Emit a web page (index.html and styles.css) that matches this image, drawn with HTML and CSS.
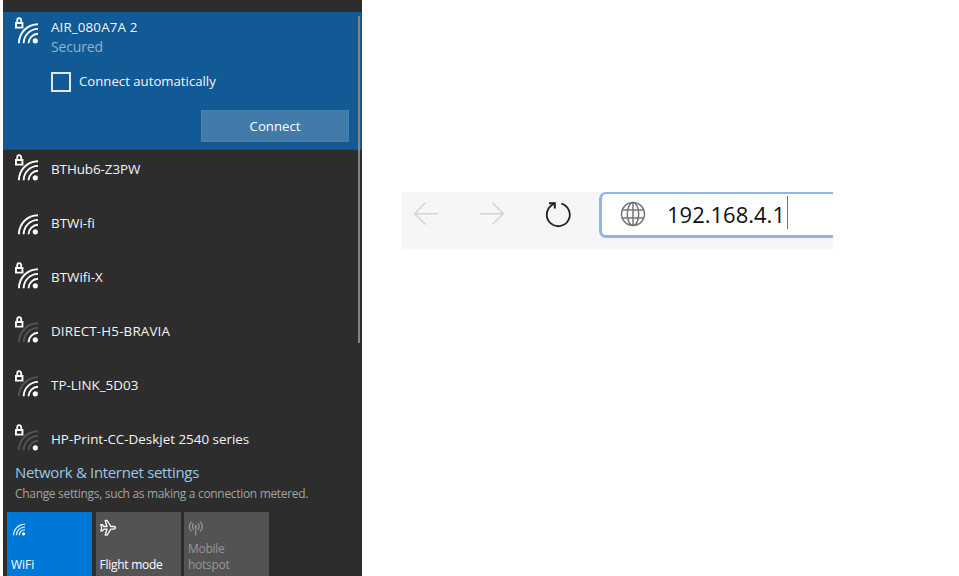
FILE: index.html
```
<!DOCTYPE html>
<html lang="en">
<head>
<meta charset="utf-8">
<title>Network setup</title>
<link rel="stylesheet" href="styles.css">
</head>
<body>
<svg class="defs" aria-hidden="true">
  <symbol id="lock" viewBox="0 0 24 28">
    <path d="M2.2 6V3.6Q2.2 1.2 4.2 1.2Q6.2 1.2 6.2 3.6V6" fill="none" stroke="#fff" stroke-width="1.8"/>
    <path fill-rule="evenodd" fill="#fff" d="M0 5H8.4V11.6H0ZM1.9 7V9.7H6.5V7Z"/>
  </symbol>
  <symbol id="wifi" viewBox="0 0 24 28">
    <g fill="none" stroke="#fff" stroke-width="1.9">
      <path class="outer" d="M3.9 26.2A19.2 19.2 0 0 1 23 7.2"/>
      <path class="middle" d="M8.6 26.2A14.6 14.6 0 0 1 23 11.9"/>
      <path class="inner" d="M13.5 26.2A9.8 9.8 0 0 1 23 16.8"/>
    </g>
    <circle cx="20.3" cy="23.8" r="2.6" fill="#fff"/>
  </symbol>
</svg>
<main class="page">
  <section class="flyout">
    <div class="selected">
      <svg class="signal"><use href="#wifi"/><use href="#lock"/></svg>
      <div class="details">
        <div class="name n-air">AIR_080A7A 2</div>
        <div class="status"><span>Secured</span></div>
        <label class="auto"><span class="box"></span><span class="auto-text">Connect automatically</span></label>
        <button class="connect"><span>Connect</span></button>
      </div>
    </div>
    <div class="networks">
      <div class="row"><svg class="signal"><use href="#wifi"/><use href="#lock"/></svg><span class="name n-hub">BTHub6-Z3PW</span></div>
      <div class="row"><svg class="signal"><use href="#wifi"/></svg><span class="name n-bt">BTWi-fi</span></div>
      <div class="row"><svg class="signal"><use href="#wifi"/><use href="#lock"/></svg><span class="name n-btx">BTWifi-X</span></div>
      <div class="row"><svg class="signal bars-1"><use href="#wifi"/><use href="#lock"/></svg><span class="name n-direct">DIRECT-H5-BRAVIA</span></div>
      <div class="row"><svg class="signal bars-2"><use href="#wifi"/><use href="#lock"/></svg><span class="name n-tp">TP-LINK_5D03</span></div>
      <div class="row"><svg class="signal bars-0"><use href="#wifi"/><use href="#lock"/></svg><span class="name n-hp">HP-Print-CC-Deskjet 2540 series</span></div>
    </div>
    <div class="settings">
      <div class="title"><span>Network &amp; Internet settings</span></div>
      <div class="hint"><span>Change settings, such as making a connection metered.</span></div>
    </div>
    <div class="tiles">
      <div class="tile on">
        <svg class="glyph glyph-wifi" viewBox="0 0 18 18"><g fill="none" stroke="#fff" stroke-width="1.1"><path d="M2.6 15.3A11.2 11.2 0 0 1 14 4.3"/><path d="M5.3 15.3A8.6 8.6 0 0 1 14 7"/><path d="M8.1 15.3A5.8 5.8 0 0 1 14 9.7"/></g><circle cx="12.5" cy="13.8" r="1.6" fill="#fff"/></svg>
        <span class="t-wifi">WiFi</span>
      </div>
      <div class="tile">
        <svg class="glyph" viewBox="0 0 18 18"><path d="M.8 5.7H2.5L4 7.5H7L5.2 1.5H7.2L10.8 7.5H13.8Q15.5 7.7 15.5 8.8Q15.5 9.9 13.8 10.1H10.8L7.2 16H5.2L7 10.1H4L2.5 11.9H.8L1.8 8.8Z" fill="none" stroke="#fff" stroke-width="1.3" stroke-linejoin="round"/></svg>
        <span class="t-flight">Flight mode</span>
      </div>
      <div class="tile off">
        <svg class="glyph" viewBox="0 0 18 18"><g fill="none" stroke="#999" stroke-width="1.2"><path d="M3.4 2.6Q-.8 7.5 3.4 12.4M5.7 4.3Q3.1 7.5 5.7 10.7M12.2 2.6Q16.4 7.5 12.2 12.4M9.9 4.3Q12.5 7.5 9.9 10.7M7.8 8V16.5"/></g><circle cx="7.8" cy="7.4" r="1.2" fill="#999"/></svg>
        <span class="t-hot">Mobile<br>hotspot</span>
      </div>
    </div>
    <div class="scrollbar"></div>
  </section>
  <section class="browser">
    <svg class="nav" viewBox="0 0 197 57">
      <g fill="none" stroke="#d3d3d3" stroke-width="1.4"><path d="M36 21.7H13M23.5 10.8L12.7 21.7L23.5 32.5"/><path d="M78 21.7H101M90.5 10.8L101.3 21.7L90.5 32.5"/></g>
      <path d="M159.3 11.6A11.5 11.5 0 1 1 149 13.8L152.6 11" fill="none" stroke="#222" stroke-width="1.8"/>
      <path d="M147 11.2H152.8V16.6" fill="none" stroke="#222" stroke-width="2"/>
    </svg>
    <div class="address">
      <svg class="globe" viewBox="0 0 26 26"><g fill="none" stroke="#777" stroke-width="1.5"><circle cx="13" cy="13" r="11.5"/><ellipse cx="13" cy="13" rx="5.7" ry="11.5"/><path d="M13 1.5V24.5M2.3 9H23.7M2.3 17H23.7"/></g></svg>
      <span class="ip">192.168.4.1</span><span class="caret"></span>
    </div>
  </section>
</main>
</body>
</html>
```
FILE: styles.css
```
* { box-sizing: border-box; }
body { margin: 0; background: #fff; font-family: "Open Sans", "Noto Sans", sans-serif; overflow: hidden; }
.defs { position: absolute; width: 0; height: 0; }
.page { display: flex; width: 959px; height: 576px; }
.flyout { position: relative; width: 359px; height: 576px; margin-left: 3px; padding-top: 12px; background: #2d2d2d; color: #f4f4f4; font-size: 13.2px; flex: none; overflow: hidden; }
.selected { display: flex; height: 138px; background: #125a95; padding: 5px 13px 0 12px; border-bottom: 1px solid #194d78; }
.signal { width: 24px; height: 28px; flex: none; display: block; }
.outer { stroke: var(--outer, #fff); }
.middle { stroke: var(--middle, #fff); }
.inner { stroke: var(--inner, #fff); }
.bars-2 { --outer: #545454; }
.bars-1 { --outer: #545454; --middle: #545454; }
.bars-0 { --outer: #545454; --middle: #545454; --inner: #545454; }
.details { display: flex; flex-direction: column; flex: 1; margin-left: 12px; }
.name { font-size: 13.4px; line-height: 20px; white-space: nowrap; }
.n-air { letter-spacing: .12px; }
.n-direct { letter-spacing: .15px; }
.n-hub { letter-spacing: -.06px; }
.details .name { height: 20px; }
.status { height: 20px; line-height: 20px; font-size: 14px; letter-spacing: -.15px; color: #8fb3d0; }
.auto { display: flex; align-items: center; height: 20px; margin-top: 15px; }
.auto-text { line-height: 20px; margin-top: -2px; }
.box { width: 20px; height: 20px; border: 2px solid #dce7f0; margin-right: 8px; }
.connect { width: 148px; height: 32px; margin-top: 17.5px; align-self: flex-end; border: 1px solid #4b80ae; background: #427ba9; color: #fff; font: inherit; padding: 0; }
.networks { height: 307px; overflow: hidden; }
.row { display: flex; height: 54px; padding: 4px 0 0 12px; }
.row .name { margin: 5px 0 0 12px; }
.settings { height: 55px; padding: 6px 0 0 12px; white-space: nowrap; }
.title { height: 20px; line-height: 19px; font-size: 15px; letter-spacing: -.34px; color: #96c8ec; }
.hint { height: 20px; line-height: 21px; font-size: 12px; letter-spacing: -.32px; color: #a3a3a3; }
.tiles { display: grid; grid-template-columns: repeat(3, 85px); gap: 3.5px; height: 64px; padding-left: 4px; }
.tile { display: flex; flex-direction: column; justify-content: space-between; background: #535353; padding: 7px 4px 3px; font-size: 12px; line-height: 16px; color: #fff; white-space: nowrap; }
.tile.on { background: #0078d7; }
.tile.off { color: #969696; }
.t-flight, .t-hot { letter-spacing: -.27px; }
.glyph { width: 18px; height: 18px; display: block; }
.glyph-wifi { margin-top: 1px; }
.scrollbar { position: absolute; right: 2px; top: 16px; width: 2px; height: 327px; background: #858585; }
.browser { display: flex; width: 431px; height: 57px; margin: 192px 0 0 40px; background: #f6f6f6; overflow: hidden; }
.nav { width: 197px; height: 57px; flex: none; }
.address { display: flex; align-items: center; width: 240px; height: 46px; flex: none; border: 3px solid #8fb4ef; border-top-width: 2px; border-radius: 7px; background: #fff; padding-left: 18px; }
.globe { width: 26px; height: 26px; margin-top: -1px; }
.ip { margin: -1px 0 0 21px; font-size: 22px; line-height: 30px; color: #111; }
.caret { width: 1.5px; height: 33px; background: #777; margin-left: 2px; margin-top: -4px; }
```
